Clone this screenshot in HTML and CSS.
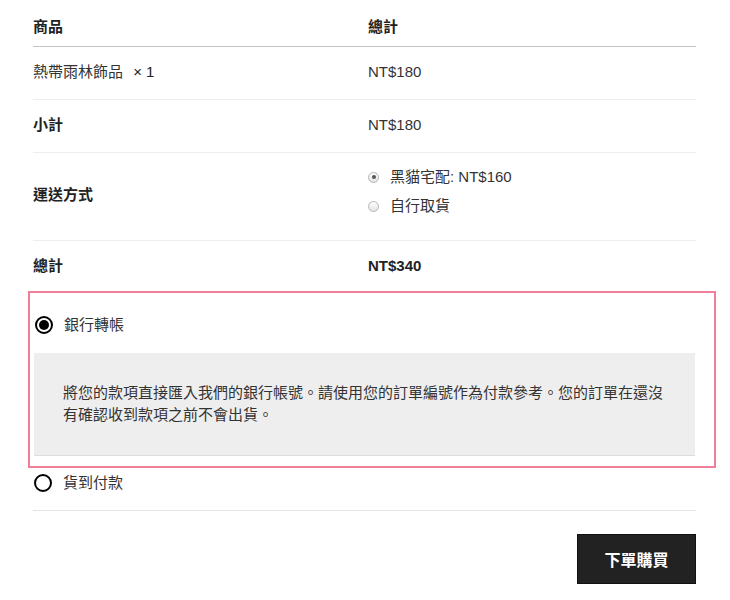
FILE: index.html
```html
<!DOCTYPE html>
<html lang="zh-Hant">
<head>
    <meta charset="UTF-8">
    <meta name="viewport" content="width=device-width, initial-scale=1.0">
    <title>結帳 - 您的訂單</title>
    <link rel="stylesheet" href="styles.css">
</head>
<body>
    <div class="checkout">
        <div class="order-table">
            <div class="row head">
                <div class="cell">商品</div>
                <div class="cell">總計</div>
            </div>
            <div class="row">
                <div class="cell product">熱帶雨林飾品 <span class="qty">× 1</span></div>
                <div class="cell">NT$180</div>
            </div>
            <div class="row">
                <div class="cell label">小計</div>
                <div class="cell">NT$180</div>
            </div>
            <div class="row shipping">
                <div class="cell label">運送方式</div>
                <div class="cell">
                    <ul class="ship-list">
                        <li><span class="mini-radio checked"></span>黑貓宅配: NT$160</li>
                        <li><span class="mini-radio"></span>自行取貨</li>
                    </ul>
                </div>
            </div>
            <div class="row total">
                <div class="cell label">總計</div>
                <div class="cell label">NT$340</div>
            </div>
        </div>

        <div class="payment-box">
            <div class="pay-option">
                <span class="radio checked"></span>銀行轉帳
            </div>
            <div class="pay-desc">
                將您的款項直接匯入我們的銀行帳號。請使用您的訂單編號作為付款參考。您的訂單在還沒有確認收到款項之前不會出貨。
            </div>
        </div>

        <div class="pay-option cod">
            <span class="radio"></span>貨到付款
        </div>

        <div class="actions">
            <button class="order-button">下單購買</button>
        </div>
    </div>
</body>
</html>
```

FILE: styles.css
```css
body {
    margin: 0;
    padding: 0;
    background: #ffffff;
    font-family: "Liberation Sans", "Noto Sans CJK TC", sans-serif;
    font-size: 15px;
    line-height: 22px;
    color: #333;
}
.checkout {
    width: 663px;
    margin-left: 33px;
}
.row {
    display: grid;
    grid-template-columns: 335px 1fr;
    padding: 14px 0 16px;
    border-bottom: 1px solid #eee;
}
.row.head {
    padding: 16px 0 8px;
    border-bottom: 1px solid #c4c4c4;
    font-weight: bold;
    color: #222;
}
.row.total {
    padding: 14px 0 14px;
    border-bottom: none;
}
.label {
    font-weight: bold;
    color: #222;
}
.qty {
    margin-left: 6px;
    color: #222;
}
.row.shipping {
    padding: 13px 0 16px;
    align-items: center;
}
.ship-list {
    list-style: none;
    margin: 0;
    padding: 0;
}
.ship-list li {
    display: flex;
    align-items: center;
    height: 22px;
    margin-bottom: 7px;
}
.mini-radio {
    width: 9px;
    height: 9px;
    border: 1px solid #b5b5b5;
    border-radius: 50%;
    background: linear-gradient(#fdfdfd, #e4e4e4);
    margin: 0 11px 0 0;
    position: relative;
}
.mini-radio.checked::after {
    content: '';
    position: absolute;
    width: 4px;
    height: 4px;
    top: 2.5px;
    left: 2.5px;
    border-radius: 50%;
    background: #555;
}
/* 付款方式外框 */
.payment-box {
    margin: 0 -20px 0 -5px;
    padding: 21px 19px 10px 4px;
    border: 2px solid #f07f9a;
}
.pay-option {
    display: flex;
    align-items: center;
    height: 22px;
    color: #333;
}
.radio {
    width: 14px;
    height: 14px;
    border: 2px solid #000;
    border-radius: 50%;
    margin: 0 11px 0 1px;
    position: relative;
    flex-shrink: 0;
}
.radio.checked::after {
    content: '';
    position: absolute;
    width: 10px;
    height: 10px;
    top: 2px;
    left: 2px;
    border-radius: 50%;
    background: #000;
}
.pay-desc {
    margin-top: 17px;
    padding: 29px 20px 29px 29px;
    background: #eeeeee;
    border-bottom: 1px solid #dddddd;
    color: #333;
}
.pay-option.cod {
    padding: 4px 0 16px;
    height: 22px;
    border-bottom: 1px solid #e4e4e4;
}
.actions {
    display: flex;
    justify-content: flex-end;
    margin-top: 23px;
}
.order-button {
    width: 119px;
    height: 50px;
    background: #222;
    color: #fff;
    border: 1px solid #111;
    font-family: "Liberation Sans", "Noto Sans CJK TC", sans-serif;
    font-size: 16px;
    font-weight: bold;
    cursor: pointer;
}
.order-button:hover {
    background: #000;
}
```
